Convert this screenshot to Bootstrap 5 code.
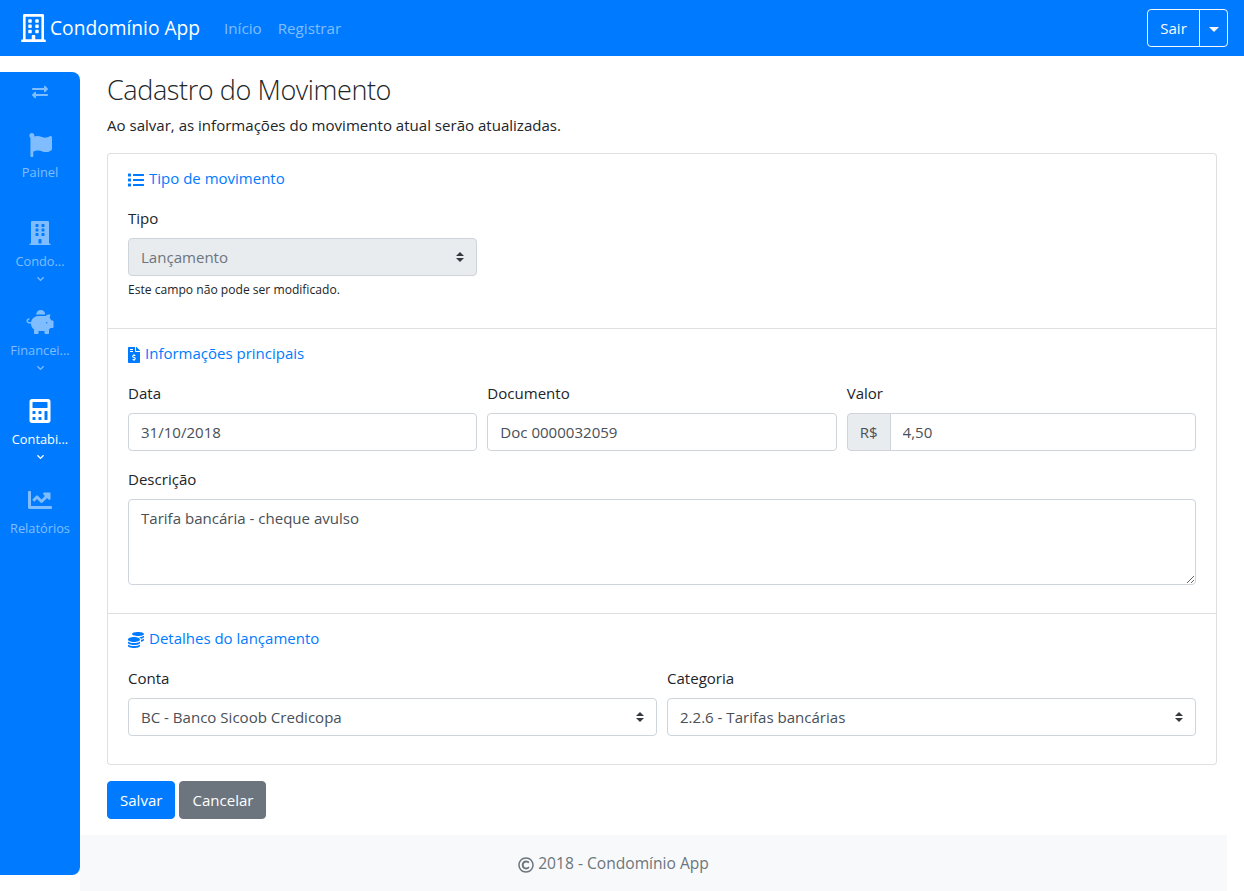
<!DOCTYPE html>
<html lang="pt-BR">
<head>
  <meta charset="UTF-8" />
  <meta name="viewport" content="width=device-width, initial-scale=1.0"/>
  <title>Condomínio App</title>
  <link href="https://cdn.jsdelivr.net/npm/bootstrap@5.3.0/dist/css/bootstrap.min.css" rel="stylesheet" />
  <style>
    :root {
      --bs-border-radius: .25rem;
      --bs-primary-rgb: 0, 123, 255;
      --bs-body-color: #212529;
      --fonte: "Open Sans", "Noto Sans", sans-serif;
    }

    body {
      font-family: var(--fonte);
      font-size: 15.06px;
      line-height: 24px;
      overflow: hidden;
    }

    .barra-topo {
      height: 56px;
      padding: 0 16px 0 21px;
    }

    .barra-topo .navbar-brand {
      font-size: 19.2px;
      line-height: 28px;
      margin-right: 16px;
      padding: 0;
    }

    .barra-topo .nav-link {
      color: rgba(255, 255, 255, .5);
      padding: 8px 8px;
      font-size: 15.2px;
    }

    .icone { fill: currentColor; display: inline-block; }

    .area-geral { padding-right: 17px; }

    /* menu lateral azul */
    .menu-lateral {
      width: 80px;
      flex: 0 0 80px;
      height: 803px;
      margin-top: 16px;
      background-color: #007bff;
      border-radius: 0 8px 8px 0;
      color: rgba(255, 255, 255, .5);
      text-align: center;
    }

    .menu-troca {
      height: 38px;
      padding-top: 6px;
    }

    .menu-item {
      height: 89px;
      padding-top: 23px;
      display: flex;
      flex-direction: column;
      align-items: center;
    }

    .menu-item.primeiro { height: 88px; }

    .menu-item.primeiro .menu-rotulo { margin-top: 6px; }

    .menu-item.ativo { color: #fff; }

    .menu-rotulo {
      font-size: 12.8px;
      line-height: 18px;
      margin-top: 7px;
      white-space: nowrap;
    }

    .menu-seta { margin-top: 5px; }

    .coluna-direita {
      flex-grow: 1;
      min-width: 0;
    }

    .conteudo {
      padding: 17px 10px 16px 27px;
    }

    .titulo-pagina {
      font-size: 27px;
      letter-spacing: -.4px;
      font-weight: 300;
      line-height: 33.6px;
      margin-bottom: 6px;
    }

    .subtitulo { margin-bottom: 16px; }

    .card {
      --bs-card-border-color: rgba(0, 0, 0, .125);
      --bs-card-border-radius: .25rem;
      --bs-card-inner-border-radius: calc(.25rem - 1px);
    }

    .secao {
      padding: 12px 20px;
      border-bottom: 1px solid rgba(0, 0, 0, .125);
    }

    .secao:last-child { border-bottom: 0; }

    .secao-titulo {
      color: #007bff;
      margin-bottom: 16px;
      font-size: 15px;
      font-weight: 400;
      line-height: 24px;
    }

    .secao-titulo .icone { margin-right: 5px; }

    .linha-campos {
      --bs-gutter-x: 10px;
      --bs-gutter-y: 0;
    }

    .campo { margin-bottom: 16px; }

    .form-label { margin-bottom: 8px; }

    .form-control,
    .form-select,
    .input-group-text {
      font-size: 15.06px;
      line-height: 24px;
      color: #495057;
      border-color: #ced4da;
      border-radius: .25rem;
    }

    .input-group-text { background-color: #e9ecef; }

    .form-select {
      padding: 6px 28px 6px 12px;
      background-image: url("data:image/svg+xml,%3csvg xmlns='http://www.w3.org/2000/svg' viewBox='0 0 4 5'%3e%3cpath fill='%23343a40' d='M2 0L0 2h4zm0 5L0 3h4z'/%3e%3c/svg%3e");
      background-position: right 12px center;
      background-size: 8px 10px;
    }

    .form-select:disabled {
      background-color: #e9ecef;
      color: #6c757d;
    }

    .ajuda {
      display: block;
      margin-top: 4px;
      font-size: 12.1px;
      line-height: 20.2px;
    }

    .btn {
      --bs-btn-border-radius: .25rem;
      font-size: 15.06px;
      line-height: 24px;
    }

    .btn-primary {
      --bs-btn-bg: #007bff;
      --bs-btn-border-color: #007bff;
    }

    .botao-sair { width: 53px; padding-left: 0; padding-right: 0; }

    .botao-seta { width: 29px; padding-left: 0; padding-right: 0; }

    .botao-seta::after { border-width: 5px 5px 0; vertical-align: 2px; }

    .rodape {
      height: 56px;
      padding-right: 80px;
      line-height: 56px;
      font-size: 15.6px;
      color: #6c757d;
    }
  </style>
</head>
<body>

<svg width="0" height="0" class="position-absolute">
  <symbol id="i-predio-linha" viewBox="0 0 448 512"><path d="M128 148v-40c0-6.6 5.4-12 12-12h40c6.6 0 12 5.4 12 12v40c0 6.6-5.4 12-12 12h-40c-6.6 0-12-5.4-12-12zm140 12h40c6.6 0 12-5.4 12-12v-40c0-6.6-5.4-12-12-12h-40c-6.6 0-12 5.4-12 12v40c0 6.6 5.4 12 12 12zm-128 96h40c6.6 0 12-5.4 12-12v-40c0-6.6-5.4-12-12-12h-40c-6.6 0-12 5.4-12 12v40c0 6.6 5.4 12 12 12zm128 0h40c6.6 0 12-5.4 12-12v-40c0-6.6-5.4-12-12-12h-40c-6.6 0-12 5.4-12 12v40c0 6.6 5.4 12 12 12zm-76 84v-40c0-6.6-5.4-12-12-12h-40c-6.6 0-12 5.4-12 12v40c0 6.6 5.4 12 12 12h40c6.6 0 12-5.4 12-12zm76 12h40c6.6 0 12-5.4 12-12v-40c0-6.6-5.4-12-12-12h-40c-6.6 0-12 5.4-12 12v40c0 6.6 5.4 12 12 12zm180 124v36H0v-36c0-6.6 5.4-12 12-12h19.5V24c0-13.3 10.7-24 24-24h337c13.3 0 24 10.7 24 24v440H436c6.6 0 12 5.4 12 12zM79.500 463H192v-67c0-6.600 5.400-12 12-12h40c6.600 0 12 5.400 12 12v67h112.500V49L80 48l-.5 415z"/></symbol>
  <symbol id="i-predio" viewBox="0 0 448 512"><path d="M436 480h-20V24c0-13.255-10.745-24-24-24H56C42.745 0 32 10.745 32 24v456H12c-6.627 0-12 5.373-12 12v20h448v-20c0-6.627-5.373-12-12-12zM128 76c0-6.627 5.373-12 12-12h40c6.627 0 12 5.373 12 12v40c0 6.627-5.373 12-12 12h-40c-6.627 0-12-5.373-12-12V76zm0 96c0-6.627 5.373-12 12-12h40c6.627 0 12 5.373 12 12v40c0 6.627-5.373 12-12 12h-40c-6.627 0-12-5.373-12-12v-40zm52 148h-40c-6.627 0-12-5.373-12-12v-40c0-6.627 5.373-12 12-12h40c6.627 0 12 5.373 12 12v40c0 6.627-5.373 12-12 12zm76 160h-64v-84c0-6.627 5.373-12 12-12h40c6.627 0 12 5.373 12 12v84zm64-172c0 6.627-5.373 12-12 12h-40c-6.627 0-12-5.373-12-12v-40c0-6.627 5.373-12 12-12h40c6.627 0 12 5.373 12 12v40zm0-96c0 6.627-5.373 12-12 12h-40c-6.627 0-12-5.373-12-12v-40c0-6.627 5.373-12 12-12h40c6.627 0 12 5.373 12 12v40zm0-96c0 6.627-5.373 12-12 12h-40c-6.627 0-12-5.373-12-12V76c0-6.627 5.373-12 12-12h40c6.627 0 12 5.373 12 12v40z"/></symbol>
  <symbol id="i-bandeira" viewBox="0 0 512 512" preserveAspectRatio="none"><path d="M349.565 98.783C295.978 98.783 251.721 64 184.348 64c-24.955 0-47.309 4.384-68.045 12.013a55.947 55.947 0 0 0 3.586-23.562C118.117 24.015 94.806 1.206 66.338.048 34.345-1.254 8 24.296 8 56c0 19.026 9.497 35.825 24 45.945V488c0 13.255 10.745 24 24 24h16c13.255 0 24-10.745 24-24v-94.400c28.311-12.064 63.582-22.122 114.435-22.122 53.588 0 97.844 34.783 165.217 34.783 48.169 0 86.667-16.294 122.505-40.858C506.840 359.452 512 349.571 512 339.045v-243.100c0-23.393-24.269-38.870-45.485-29.016-34.338 15.948-76.454 31.854-116.950 31.854z"/></symbol>
  <symbol id="i-troca" viewBox="0 0 512 512"><path d="M0 168v-16c0-13.255 10.745-24 24-24h360V80c0-21.367 25.899-32.042 40.971-16.971l80 80c9.372 9.373 9.372 24.569 0 33.941l-80 80C409.956 271.982 384 261.456 384 240v-48H24c-13.255 0-24-10.745-24-24zm488 152H128v-48c0-21.314-25.862-32.080-40.971-16.971l-80 80c-9.372 9.373-9.372 24.569 0 33.941l80 80C102.057 463.997 128 453.437 128 432v-48h360c13.255 0 24-10.745 24-24v-16c0-13.255-10.745-24-24-24z"/></symbol>
  <symbol id="i-calc" viewBox="0 0 448 512"><path d="M400 0H48C22.400 0 0 22.400 0 48v416c0 25.600 22.400 48 48 48h352c25.600 0 48-22.400 48-48V48c0-25.600-22.400-48-48-48zM128 435c0 6.600-5.400 12-12 12H76c-6.600 0-12-5.400-12-12v-40c0-6.600 5.400-12 12-12h40c6.600 0 12 5.400 12 12v40zm0-128c0 6.600-5.400 12-12 12H76c-6.600 0-12-5.400-12-12v-40c0-6.600 5.400-12 12-12h40c6.600 0 12 5.400 12 12v40zm128 128c0 6.600-5.400 12-12 12h-40c-6.600 0-12-5.400-12-12v-40c0-6.600 5.400-12 12-12h40c6.600 0 12 5.400 12 12v40zm0-128c0 6.600-5.400 12-12 12h-40c-6.600 0-12-5.400-12-12v-40c0-6.600 5.400-12 12-12h40c6.600 0 12 5.400 12 12v40zm128 128c0 6.600-5.400 12-12 12h-40c-6.600 0-12-5.400-12-12V267c0-6.600 5.400-12 12-12h40c6.600 0 12 5.400 12 12v168zm0-256c0 6.600-5.400 12-12 12H76c-6.600 0-12-5.400-12-12V77c0-6.600 5.400-12 12-12h296c6.600 0 12 5.400 12 12v102z"/></symbol>
  <symbol id="i-grafico" viewBox="0 0 512 512"><path d="M496 384H64V80c0-8.840-7.160-16-16-16H16C7.160 64 0 71.160 0 80v336c0 17.670 14.330 32 32 32h464c8.840 0 16-7.160 16-16v-32c0-8.840-7.160-16-16-16zM464 96H345.940c-21.380 0-32.090 25.850-16.970 40.970l32.400 32.400L288 242.750l-73.370-73.370c-12.500-12.500-32.760-12.500-45.250 0l-68.690 68.690c-6.250 6.250-6.250 16.380 0 22.630l22.620 22.620c6.250 6.250 16.380 6.250 22.630 0L192 237.250l73.370 73.370c12.500 12.500 32.760 12.500 45.250 0l96-96 32.400 32.400c15.120 15.120 40.970 4.410 40.970-16.970V112c.01-8.840-7.150-16-15.990-16z"/></symbol>
  <symbol id="i-porco" viewBox="0 0 576 512"><path d="M560 224h-29.500c-8.800-20-21.600-37.700-37.400-52.500L512 96h-32c-29.400 0-55.400 13.500-73 34.300-7.600-1.100-15.100-2.300-23-2.300H256c-77.400 0-141.900 55-156.800 128H56c-14.800 0-26.500-13.500-23.500-28.800C34.700 215.800 45.400 208 57 208h1c3.300 0 6-2.700 6-6v-20c0-3.300-2.700-6-6-6-28.500 0-53.900 20.400-57.500 48.600C-3.900 258.800 22.700 288 56 288h40c0 52.200 25.400 98.100 64 127.300V496c0 8.800 7.200 16 16 16h64c8.800 0 16-7.200 16-16v-48h128v48c0 8.800 7.200 16 16 16h64c8.800 0 16-7.200 16-16v-80.700c11.800-8.900 22.300-19.400 31.300-31.300H560c8.800 0 16-7.200 16-16V240c0-8.800-7.200-16-16-16zm-128 64c-8.800 0-16-7.200-16-16s7.200-16 16-16 16 7.200 16 16-7.200 16-16 16zM256 96h128c5.400 0 10.700.4 15.900.8 0-.3.1-.5.1-.8 0-53-43-96-96-96s-96 43-96 96c0 2.100.5 4.100.6 6.200 15.200-3.900 31-6.200 47.400-6.200z"/></symbol>
  <symbol id="i-lista" viewBox="0 0 512 512"><path d="M80 368H16a16 16 0 0 0-16 16v64a16 16 0 0 0 16 16h64a16 16 0 0 0 16-16v-64a16 16 0 0 0-16-16zm0-320H16A16 16 0 0 0 0 64v64a16 16 0 0 0 16 16h64a16 16 0 0 0 16-16V64a16 16 0 0 0-16-16zm0 160H16a16 16 0 0 0-16 16v64a16 16 0 0 0 16 16h64a16 16 0 0 0 16-16v-64a16 16 0 0 0-16-16zm416 176H176a16 16 0 0 0-16 16v32a16 16 0 0 0 16 16h320a16 16 0 0 0 16-16v-32a16 16 0 0 0-16-16zm0-320H176a16 16 0 0 0-16 16v32a16 16 0 0 0 16 16h320a16 16 0 0 0 16-16V80a16 16 0 0 0-16-16zm0 160H176a16 16 0 0 0-16 16v32a16 16 0 0 0 16 16h320a16 16 0 0 0 16-16v-32a16 16 0 0 0-16-16z"/></symbol>
  <symbol id="i-fatura" viewBox="0 0 384 512"><path d="M377 105L279.100 7c-4.500-4.500-10.600-7-17-7H256v128h128v-6.100c0-6.300-2.500-12.400-7-16.900zm-153 31V0H24C10.700 0 0 10.700 0 24v464c0 13.300 10.700 24 24 24h336c13.300 0 24-10.700 24-24V160H248c-13.200 0-24-10.800-24-24zM64 72c0-4.420 3.580-8 8-8h80c4.420 0 8 3.580 8 8v16c0 4.420-3.580 8-8 8H72c-4.420 0-8-3.580-8-8V72zm0 80v-16c0-4.420 3.580-8 8-8h80c4.420 0 8 3.580 8 8v16c0 4.420-3.580 8-8 8H72c-4.420 0-8-3.580-8-8zm144 263.880V440c0 4.420-3.580 8-8 8h-16c-4.420 0-8-3.580-8-8v-24.290c-11.290-.58-22.270-4.520-31.370-11.350-3.900-2.930-4.100-8.770-.57-12.140l11.750-11.210c2.770-2.640 6.890-2.760 10.130-.73 3.870 2.420 8.260 3.720 12.820 3.720h28.110c6.500 0 11.800-5.920 11.800-13.190 0-5.950-3.610-11.190-8.770-12.730l-45-13.500c-18.590-5.580-31.580-23.420-31.580-43.390 0-24.520 19.050-44.440 42.670-45.070V232c0-4.420 3.580-8 8-8h16c4.420 0 8 3.580 8 8v24.290c11.290.58 22.270 4.510 31.370 11.350 3.900 2.930 4.100 8.770.57 12.140l-11.750 11.210c-2.770 2.640-6.890 2.760-10.130.73-3.870-2.430-8.260-3.720-12.820-3.720h-28.110c-6.500 0-11.800 5.920-11.800 13.190 0 5.950 3.610 11.190 8.770 12.730l45 13.500c18.590 5.580 31.580 23.420 31.580 43.390 0 24.530-19.050 44.440-42.670 45.070z"/></symbol>
  <symbol id="i-moedas" viewBox="0 0 512 512"><path d="M0 405.300V448c0 35.300 86 64 192 64s192-28.700 192-64v-42.700C342.700 434.400 267.200 448 192 448S41.300 434.400 0 405.300zM320 128c106 0 192-28.700 192-64S426 0 320 0 128 28.700 128 64s86 64 192 64zM0 300.400V352c0 35.300 86 64 192 64s192-28.700 192-64v-51.600c-41.300 34-116.900 51.600-192 51.600S41.300 334.400 0 300.400zm416 11c57.300-11.100 96-31.700 96-55.400v-42.700c-23.200 16.400-57.300 27.600-96 34.500v63.600zM192 160C86 160 0 195.800 0 240s86 80 192 80 192-35.800 192-80-86-80-192-80zm219.300 56.300c60-10.800 100.700-32 100.700-56.300v-42.700c-35.500 25.100-96.500 38.600-160.700 41.800 29.500 14.300 51.200 33.500 60 57.200z"/></symbol>
  <symbol id="i-copyright" viewBox="0 0 512 512"><path d="M256 8C119.033 8 8 119.033 8 256s111.033 248 248 248 248-111.033 248-248S392.967 8 256 8zm0 448c-110.532 0-200-89.451-200-200 0-110.531 89.451-200 200-200 110.532 0 200 89.451 200 200 0 110.532-89.451 200-200 200zm107.351-101.064c-9.614 9.712-45.530 41.396-104.065 41.396-82.430 0-140.484-61.425-140.484-141.567 0-79.152 60.275-139.401 139.762-139.401 55.531 0 88.738 26.620 97.593 34.779a11.965 11.965 0 0 1 1.936 15.322l-18.155 28.113c-3.841 5.950-11.966 7.282-17.499 2.921-8.595-6.776-31.814-22.538-61.708-22.538-48.303 0-77.916 35.330-77.916 80.082 0 41.589 26.888 83.692 78.277 83.692 32.657 0 56.843-19.039 65.726-27.225 5.270-4.857 13.596-4.039 17.820 1.738l19.865 27.170a11.947 11.947 0 0 1-1.152 15.518z"/></symbol>
  <symbol id="i-seta" viewBox="0 0 448 512"><path d="M207.029 381.476L12.686 187.132c-9.373-9.373-9.373-24.569 0-33.941l22.667-22.667c9.357-9.357 24.522-9.375 33.901-.04L224 284.505l154.745-154.021c9.379-9.335 24.544-9.317 33.901.04l22.667 22.667c9.373 9.373 9.373 24.569 0 33.941L240.971 381.476c-9.373 9.372-24.569 9.372-33.942 0z"/></symbol>
</svg>

<nav class="navbar navbar-expand navbar-dark bg-primary barra-topo">
  <a class="navbar-brand d-flex align-items-center gap-1" href="#">
    <svg class="icone" width="25" height="28"><use href="#i-predio-linha"/></svg>
    Condomínio App
  </a>
  <ul class="navbar-nav me-auto">
    <li class="nav-item"><a class="nav-link" href="#">Início</a></li>
    <li class="nav-item"><a class="nav-link" href="#">Registrar</a></li>
  </ul>
  <div class="btn-group">
    <button type="button" class="btn btn-outline-light botao-sair">Sair</button>
    <button type="button" class="btn btn-outline-light dropdown-toggle dropdown-toggle-split botao-seta"></button>
  </div>
</nav>

<div class="d-flex area-geral">
  <aside class="menu-lateral">
    <div class="menu-troca"><svg class="icone" width="16" height="16"><use href="#i-troca"/></svg></div>
    <div class="menu-item primeiro">
      <svg class="icone" width="23" height="24"><use href="#i-bandeira"/></svg>
      <span class="menu-rotulo">Painel</span>
    </div>
    <div class="menu-item">
      <svg class="icone" width="24" height="24"><use href="#i-predio"/></svg>
      <span class="menu-rotulo">Condo...</span>
      <svg class="icone menu-seta" width="7" height="8"><use href="#i-seta"/></svg>
    </div>
    <div class="menu-item">
      <svg class="icone" width="28" height="24"><use href="#i-porco"/></svg>
      <span class="menu-rotulo">Financei...</span>
      <svg class="icone menu-seta" width="7" height="8"><use href="#i-seta"/></svg>
    </div>
    <div class="menu-item ativo">
      <svg class="icone" width="24" height="24"><use href="#i-calc"/></svg>
      <span class="menu-rotulo">Contabi...</span>
      <svg class="icone menu-seta" width="7" height="8"><use href="#i-seta"/></svg>
    </div>
    <div class="menu-item">
      <svg class="icone" width="24" height="24"><use href="#i-grafico"/></svg>
      <span class="menu-rotulo">Relatórios</span>
    </div>
  </aside>

  <div class="coluna-direita">
    <main class="conteudo">
      <h3 class="titulo-pagina">Cadastro do Movimento</h3>
      <p class="subtitulo">Ao salvar, as informações do movimento atual serão atualizadas.</p>

      <form class="card mb-3">
        <section class="secao">
          <h6 class="secao-titulo"><svg class="icone" width="16" height="16"><use href="#i-lista"/></svg>Tipo de movimento</h6>
          <div class="row linha-campos">
            <div class="col-4 campo">
              <label class="form-label">Tipo</label>
              <select class="form-select" disabled><option>Lançamento</option></select>
              <small class="ajuda">Este campo não pode ser modificado.</small>
            </div>
          </div>
        </section>

        <section class="secao">
          <h6 class="secao-titulo"><svg class="icone" width="12" height="16"><use href="#i-fatura"/></svg>Informações principais</h6>
          <div class="row linha-campos">
            <div class="col-4 campo">
              <label class="form-label">Data</label>
              <input class="form-control" value="31/10/2018">
            </div>
            <div class="col-4 campo">
              <label class="form-label">Documento</label>
              <input class="form-control" value="Doc 0000032059">
            </div>
            <div class="col-4 campo">
              <label class="form-label">Valor</label>
              <div class="input-group">
                <span class="input-group-text">R$</span>
                <input class="form-control" value="4,50">
              </div>
            </div>
            <div class="col-12 campo">
              <label class="form-label">Descrição</label>
              <textarea class="form-control" rows="3">Tarifa bancária - cheque avulso</textarea>
            </div>
          </div>
        </section>

        <section class="secao">
          <h6 class="secao-titulo"><svg class="icone" width="16" height="16"><use href="#i-moedas"/></svg>Detalhes do lançamento</h6>
          <div class="row linha-campos">
            <div class="col-6 campo">
              <label class="form-label">Conta</label>
              <select class="form-select"><option>BC - Banco Sicoob Credicopa</option></select>
            </div>
            <div class="col-6 campo">
              <label class="form-label">Categoria</label>
              <select class="form-select"><option>2.2.6 - Tarifas bancárias</option></select>
            </div>
          </div>
        </section>
      </form>

      <div class="d-flex gap-1">
        <button type="button" class="btn btn-primary">Salvar</button>
        <button type="button" class="btn btn-secondary">Cancelar</button>
      </div>
    </main>

    <footer class="bg-light text-center rodape">
      <svg class="icone" width="16" height="16"><use href="#i-copyright"/></svg>
      2018 - Condomínio App
    </footer>
  </div>
</div>

<script src="https://cdn.jsdelivr.net/npm/bootstrap@5.3.0/dist/js/bootstrap.bundle.min.js"></script>
</body>
</html>
